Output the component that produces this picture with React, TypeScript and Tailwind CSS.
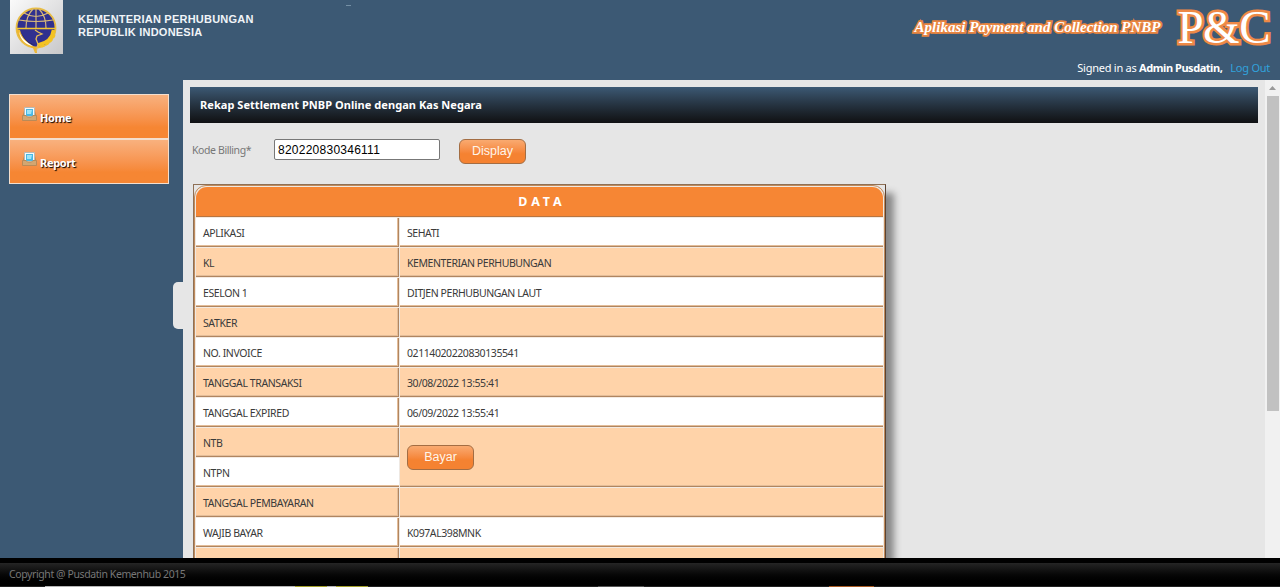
import React from "react";

const rows: [string, string][] = [
  ["APLIKASI", "SEHATI"],
  ["KL", "KEMENTERIAN PERHUBUNGAN"],
  ["ESELON 1", "DITJEN PERHUBUNGAN LAUT"],
  ["SATKER", ""],
  ["NO. INVOICE", "02114020220830135541"],
  ["TANGGAL TRANSAKSI", "30/08/2022 13:55:41"],
  ["TANGGAL EXPIRED", "06/09/2022 13:55:41"],
];

const cell =
  "box-border flex h-[29px] w-[203px] items-center border-b border-[#b08560] pl-[7px] pt-[3px] text-[10.5px] tracking-[-0.4px] text-[#3a3a3a] whitespace-nowrap";
const valueCell =
  "ml-[1px] box-border flex h-[29px] w-[483px] items-center border-b border-[#b08560] pl-[7px] pt-[3px] text-[10.5px] tracking-[-0.42px] text-[#3a3a3a] whitespace-nowrap shadow-[inset_0_-1px_0_#e3bd99]";
const cellEdge = "border-r shadow-[inset_-1px_-1px_0_#e3bd99]";

function Row({ label, value, tint }: { label: string; value: string; tint: boolean }) {
  const bg = tint ? "bg-[#ffd3a9]" : "bg-white";
  return (
    <div className="flex h-[30px] border-t border-[#f3eae2]">
      <div className={`${cell} ${cellEdge} ${bg}`}>{label}</div>
      <div className={`${valueCell} ${bg}`}>{value}</div>
    </div>
  );
}

function Logo() {
  return (
    <svg width="53" height="54" viewBox="0 0 53 54" className="block">
      <defs>
        <linearGradient id="plate" x1="0" y1="0" x2="1" y2="1">
          <stop offset="0" stopColor="#fafafa" />
          <stop offset="1" stopColor="#c8c8ca" />
        </linearGradient>
      </defs>
      <rect width="53" height="54" fill="url(#plate)" />
      <circle cx="26" cy="28" r="19.500" fill="#30308f" stroke="#e8bd45" strokeWidth="1.800" />
      <g fill="none" stroke="#d7b879" strokeWidth="1.200">
        <path d="M26 9V28M14 13Q26 20 38 13M9 20Q26 23 43 20M23 9Q16 16 16 28M29 9Q36 16 36 28" />
      </g>
      <path d="M6.500 28.500H45.500" stroke="#f3c62f" strokeWidth="1.600" />
      <path d="M6.500 29C8 39 15 45 23 48L25 53H27V48C18 44 12 38 10 30Z" fill="#efb82e" />
      <path d="M9 31C11 38 16 42 23 46C16 45 10 40 9 31Z" fill="#fff" />
      <path d="M11 31C13 38 18 43 25 45C19 44 13 39 11 31Z" fill="#2a2330" />
      <path d="M43.500 30C42.500 38 38 43 28 45" fill="none" stroke="#f4c323" strokeWidth="3.500" />
      <path d="M44.500 35C41 42 36 46 28 47" fill="none" stroke="#f4c323" strokeWidth="2.500" strokeDasharray="3 2" />
      <path d="M25 30L28 32L32 34L27 36L26 39L28 44L26 52" fill="none" stroke="#e5bb58" strokeWidth="1.300" />
    </svg>
  );
}

function TrayIcon() {
  return (
    <svg width="15" height="14" viewBox="0 0 15 14" className="block shrink-0">
      <path d="M.5 9L2 4H13L14.500 9V13.500H.5Z" fill="#c08a52" />
      <path d="M2.500 .5H12.500V10H2.500Z" fill="#f5f9fb" stroke="#b8b9b5" />
      <rect x="4" y="2" width="7" height="7" fill="#48b9e6" />
      <path d="M5 3H10L9 7H5Z" fill="#9ee4f7" />
      <path d="M.5 8.500H4L5.500 10H9.500L11 8.500H14.500V13.500H.5Z" fill="#d3a671" stroke="#b98a58" />
    </svg>
  );
}

function MenuItem({ label }: { label: string }) {
  return (
    <div className="flex h-[45px] border border-[#f4dfce] bg-linear-to-b from-[#f8b17e] to-[#f68633] to-75% pt-[12px] pl-[12px]">
      <TrayIcon />
      <span className="mt-[3px] ml-[3px] text-[11px] leading-[16px] font-bold tracking-[-0.3px] text-white [text-shadow:1px_1px_1px_#000]">
        {label}
      </span>
    </div>
  );
}

function ActionButton({ label }: { label: string }) {
  return (
    <button className="block h-[25px] w-[67px] rounded-[6px] border border-[#a36d43] bg-linear-to-b from-[#f9aa70] to-[#f58231] to-60% text-center font-['Liberation_Sans',sans-serif] text-[12.5px] leading-[23px] text-[#fff5ea]">
      {label}
    </button>
  );
}

export default function App() {
  return (
    <div className="flex h-[587px] w-[1280px] flex-col overflow-hidden bg-[#3c5974] font-['Noto_Sans',sans-serif]">
      <header className="flex h-[80px] shrink-0 items-start">
        <div className="ml-[10px] h-[54px] w-[53px]">
          <Logo />
        </div>
        <div className="mt-[13px] ml-[15px] w-[180px] font-['Liberation_Sans',sans-serif] text-[11px] leading-[12.5px] font-bold tracking-[0.22px] whitespace-nowrap text-[#f0f4f8]">
          KEMENTERIAN PERHUBUNGAN
          <br />
          REPUBLIK INDONESIA
        </div>
        <div className="mt-[5px] ml-[88px] h-px w-[5px] bg-[#7590a5]" />
        <div className="mr-[10px] ml-auto flex flex-col items-end">
          <div className="flex h-[58px] items-start font-['Liberation_Serif',serif] text-white">
            <span className="mt-[17px] mr-[17px] text-[15px] leading-[20px] font-bold italic whitespace-nowrap [-webkit-text-stroke:3.5px_#e98540] [paint-order:stroke_fill]">
              Aplikasi Payment and Collection PNBP
            </span>
            <span className="mt-[4px] text-[47px] leading-[47px] tracking-[-0.5px] [-webkit-text-stroke:5px_#ee8946] [paint-order:stroke_fill]">
              P&amp;C
            </span>
          </div>
          <div className="text-[11px] leading-[20px] tracking-[-0.25px] whitespace-nowrap text-white">
            Signed in as <b className="tracking-[-0.45px]">Admin Pusdatin,</b>
            <span className="ml-[8px] text-[#31a3dc]">Log Out</span>
          </div>
        </div>
      </header>
      <div className="flex h-[478px] shrink-0">
        <aside className="flex w-[183px] shrink-0 justify-between">
          <nav className="mt-[14px] ml-[9px] h-[90px] w-[160px]">
            <MenuItem label="Home" />
            <MenuItem label="Report" />
          </nav>
          <div className="mt-[202px] h-[47px] w-[10px] rounded-l-[5px] bg-[#e6e6e6]" />
        </aside>
        <main className="h-[478px] w-[1082px] overflow-hidden bg-[#e6e6e6] pt-[7px] pl-[7px]">
          <h1 className="flex h-[36px] w-[1068px] items-center bg-linear-to-b from-[#3c5974] to-[#101113] pt-[1px] pl-[10px] text-[11px] font-bold tracking-[0.05px] text-white">
            Rekap Settlement PNBP Online dengan Kas Negara
          </h1>
          <div className="flex h-[61px] items-start">
            <label className="mt-[19px] ml-[2px] w-[82px] text-[10.5px] leading-[16px] tracking-[-0.4px] text-[#777]">
              Kode Billing*
            </label>
            <input
              className="mt-[16px] h-[21px] w-[166px] rounded-[2px] border border-[#777] bg-white px-[3px] font-['Liberation_Sans',sans-serif] text-[12px] tracking-[0.25px] text-black"
              defaultValue="820220830346111"
            />
            <div className="mt-[16px] ml-[19px]">
              <ActionButton label="Display" />
            </div>
          </div>
          <section className="ml-[3px] h-[500px] w-[693px] border border-[#8f7055] border-r-[#5b4332] shadow-[8px_9px_7px_#888]">
            <div className="h-[498px] rounded-t-[12px] border border-[#c08b5c] bg-[#eee8e2] p-[1px]">
              <h2 className="flex h-[30px] items-center justify-center rounded-t-[11px] border-b border-[#b87540] bg-[#f68634] pt-[1px] pl-[5px] text-[12.5px] font-bold tracking-[3.9px] text-white">
                DATA
              </h2>
              {rows.map(([label, value], i) => (
                <Row key={label} label={label} value={value} tint={i % 2 === 1} />
              ))}
              <div className="flex h-[60px]">
                <div className="w-[203px]">
                  <div className="h-[30px] border-t border-[#f3eae2]">
                    <div className={`${cell} ${cellEdge} bg-[#ffd3a9]`}>NTB</div>
                  </div>
                  <div className="h-[30px] border-t border-[#f3eae2]">
                    <div className={`${cell} bg-white shadow-[inset_0_-1px_0_#e3bd99]`}>NTPN</div>
                  </div>
                </div>
                <div className="ml-[1px] flex w-[483px] items-center border-t border-b border-t-[#f3eae2] border-b-[#b08560] bg-[#ffd3a9] pt-[1px] pl-[7px] shadow-[inset_0_-1px_0_#e3bd99]">
                  <ActionButton label="Bayar" />
                </div>
              </div>
              <Row label="TANGGAL PEMBAYARAN" value="" tint />
              <Row label="WAJIB BAYAR" value="K097AL398MNK" tint={false} />
              <Row label="" value="" tint />
            </div>
          </section>
        </main>
        <div className="flex w-[15px] flex-col items-center bg-[#f1f1f1]">
          <svg width="15" height="15" viewBox="0 0 15 15">
            <path d="M4 10L7.500 6L11 10Z" fill="#999" />
          </svg>
          <div className="mt-[1px] h-[315px] w-[12px] bg-[#c1c1c1]" />
        </div>
      </div>
      <footer className="h-[28px] shrink-0 border-t-[5px] border-black bg-linear-to-b from-[#252525] to-black pl-[9px] text-[10.5px] leading-[22px] tracking-[-0.4px] text-[#777]">
        Copyright @ Pusdatin Kemenhub 2015
      </footer>
      <div className="flex h-px shrink-0 bg-[#222]">
        <div className="ml-[45px] w-[250px] bg-[#b5b5b5]" />
        <div className="w-[32px] bg-[#a3a02c]" />
        <div className="w-[9px] bg-[#b5b5b5]" />
        <div className="w-[32px] bg-[#a3a02c]" />
        <div className="ml-[230px] w-[46px] bg-[#555]" />
        <div className="ml-[185px] w-[45px] bg-[#a95b23]" />
      </div>
    </div>
  );
}
